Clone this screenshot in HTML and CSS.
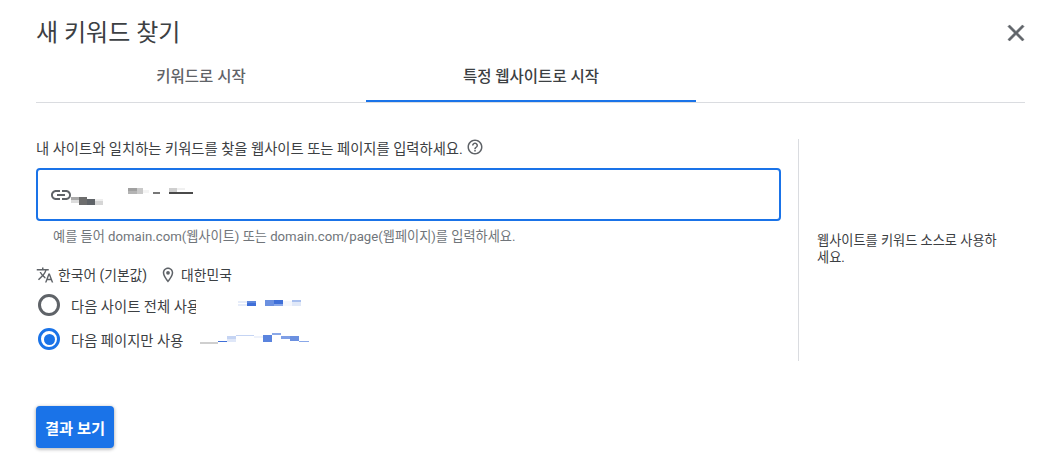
FILE: index.html
```html
<!DOCTYPE html>
<html lang="ko">
<head>
  <meta charset="UTF-8" />
  <title>새 키워드 찾기</title>
  <link rel="stylesheet" href="styles.css">
</head>
<body>
  <div class="dialog">
    <div class="header">
      <h1>새 키워드 찾기</h1>
      <svg class="close" viewBox="0 0 24 24"><path d="M19 6.41L17.59 5 12 10.59 6.41 5 5 6.41 10.59 12 5 17.59 6.41 19 12 13.41 17.59 19 19 17.59 13.41 12z"/></svg>
    </div>

    <div class="tabs">
      <div class="tab">키워드로 시작</div>
      <div class="tab active">특정 웹사이트로 시작</div>
    </div>

    <div class="content">
      <div class="main">
        <div class="prompt">
          <span>내 사이트와 일치하는 키워드를 찾을 웹사이트 또는 페이지를 입력하세요.</span>
          <svg class="help" viewBox="0 0 24 24"><path d="M11 18h2v-2h-2v2zm1-16C6.48 2 2 6.48 2 12s4.48 10 10 10 10-4.48 10-10S17.52 2 12 2zm0 18c-4.41 0-8-3.59-8-8s3.59-8 8-8 8 3.59 8 8-3.59 8-8 8zm0-14c-2.21 0-4 1.79-4 4h2c0-1.1.9-2 2-2s2 .9 2 2c0 2-3 1.75-3 5h2c0-2.25 3-2.5 3-5 0-2.21-1.79-4-4-4z"/></svg>
        </div>

        <div class="url-input">
          <svg class="link" viewBox="0 0 24 24"><path d="M3.9 12c0-1.71 1.39-3.1 3.1-3.1h4V7H7c-2.76 0-5 2.24-5 5s2.24 5 5 5h4v-1.9H7c-1.71 0-3.1-1.39-3.1-3.1zM8 13h8v-2H8v2zm9-6h-4v1.9h4c1.71 0 3.1 1.39 3.1 3.1s-1.39 3.1-3.1 3.1h-4V17h4c2.76 0 5-2.24 5-5s-2.24-5-5-5z"/></svg>
          <!-- 가려진 URL -->
          <svg class="smear smear-url" viewBox="0 0 124 24" shape-rendering="crispEdges">
            <rect x="0" y="15" width="8" height="3" fill="#a8a8a8"/>
            <rect x="0" y="18" width="8" height="3" fill="#dcdcdc"/>
            <rect x="8" y="15" width="8" height="8" fill="#6d6d6d"/>
            <rect x="16" y="17" width="8" height="6" fill="#5f6368"/>
            <rect x="24" y="17" width="8" height="2" fill="#eeeeee"/>
            <rect x="24" y="19" width="8" height="4" fill="#d6d6d6"/>
            <rect x="57" y="6" width="9" height="3" fill="#a0a0a0"/>
            <rect x="57" y="9" width="9" height="3" fill="#b4b4b4"/>
            <rect x="66" y="6" width="6" height="6" fill="#c9c9c9"/>
            <rect x="72" y="8" width="6" height="3" fill="#f4f4f4"/>
            <rect x="82" y="10" width="7" height="2" fill="#777777"/>
            <rect x="98" y="6" width="8" height="4" fill="#cfcfcf"/>
            <rect x="106" y="6" width="8" height="2" fill="#f0f0f0"/>
            <rect x="98" y="10" width="24" height="2" fill="#4a4a4a"/>
          </svg>
        </div>
        <div class="hint">예를 들어 domain.com(웹사이트) 또는 domain.com/page(웹페이지)를 입력하세요.</div>

        <div class="locale">
          <svg class="locale-icon" viewBox="0 0 24 24"><path d="M12.87 15.07l-2.54-2.51.03-.03c1.74-1.94 2.98-4.17 3.71-6.53H17V4h-7V2H8v2H1v1.99h11.17C11.5 7.92 10.44 9.75 9 11.35 8.07 10.32 7.3 9.19 6.69 8h-2c.73 1.63 1.73 3.17 2.98 4.56l-5.09 5.02L4 19l5-5 3.11 3.11.76-2.04zM18.5 10h-2L12 22h2l1.12-3h4.75L21 22h2l-4.5-12zm-2.62 7l1.62-4.33L19.12 17h-3.24z"/></svg>
          <span>한국어 (기본값)</span>
          <svg class="locale-icon pin" viewBox="0 0 24 24"><path d="M12 2C8.13 2 5 5.13 5 9c0 5.25 7 13 7 13s7-7.75 7-13c0-3.87-3.13-7-7-7zM7 9c0-2.76 2.24-5 5-5s5 2.24 5 5c0 2.88-2.88 7.19-5 9.88C9.92 16.21 7 11.85 7 9z"/><circle cx="12" cy="9" r="2.5"/></svg>
          <span>대한민국</span>
        </div>

        <div class="radio-row">
          <span class="radio"></span>
          <span class="radio-label clipped">다음 사이트 전체 사용</span>
          <svg class="smear smear-site" viewBox="0 0 66 8" shape-rendering="crispEdges">
            <rect x="0" y="1" width="9" height="2" fill="#e6ecf9"/>
            <rect x="0" y="4" width="9" height="2" fill="#e6ecf9"/>
            <rect x="9" y="1" width="9" height="2" fill="#5f87dc"/>
            <rect x="9" y="3" width="9" height="3" fill="#3f6fd8"/>
            <rect x="27" y="0" width="9" height="6" fill="#6b90e0"/>
            <rect x="36" y="0" width="9" height="4" fill="#3f6fd8"/>
            <rect x="36" y="4" width="9" height="2" fill="#8aa8e8"/>
            <rect x="45" y="1" width="9" height="5" fill="#f4f6fc"/>
            <rect x="54" y="0" width="9" height="2" fill="#a9c0ef"/>
            <rect x="54" y="2" width="9" height="4" fill="#e0e8f8"/>
          </svg>
        </div>
        <div class="radio-row">
          <span class="radio checked"></span>
          <span class="radio-label">다음 페이지만 사용</span>
          <svg class="smear smear-page" viewBox="0 0 112 12" shape-rendering="crispEdges">
            <rect x="0" y="9" width="18" height="2" fill="#cfcfcf"/>
            <rect x="18" y="8" width="9" height="1" fill="#3f6fd8"/>
            <rect x="27" y="3" width="9" height="3" fill="#c5d4f3"/>
            <rect x="27" y="6" width="9" height="3" fill="#dfe7f8"/>
            <rect x="36" y="2" width="18" height="1" fill="#c5d4f3"/>
            <rect x="54" y="3" width="9" height="2" fill="#eef2fb"/>
            <rect x="63" y="2" width="9" height="7" fill="#5a84de"/>
            <rect x="72" y="0" width="9" height="2" fill="#8aa8e8"/>
            <rect x="81" y="3" width="9" height="3" fill="#7f9fe6"/>
            <rect x="90" y="3" width="9" height="5" fill="#6b90e0"/>
            <rect x="99" y="8" width="10" height="1" fill="#8aa8e8"/>
          </svg>
        </div>
      </div>

      <div class="side">
        <p>웹사이트를 키워드 소스로 사용하세요.</p>
      </div>
    </div>

    <button class="submit" type="button">결과 보기</button>
  </div>
</body>
</html>
```

FILE: styles.css
```css
body {
  margin: 0;
  background: #fff;
  font-family: Roboto, "Noto Sans CJK KR", sans-serif;
  color: #3c4043;
}

.dialog {
  width: 1060px;
  height: 457px;
  box-sizing: border-box;
  padding: 17px 35px 0 36px;
  overflow: hidden;
}

.header {
  display: flex;
  justify-content: space-between;
  align-items: center;
  height: 32px;
}

h1 {
  margin: 0;
  font-size: 24px;
  line-height: 32px;
  font-weight: 400;
  color: #3c4043;
}

.close {
  width: 24px;
  height: 24px;
  margin: 0 -3px 0 0;
  fill: #5f6368;
  stroke: #5f6368;
  stroke-width: 0.5;
  transform: scale(1.15);
}

.tabs {
  display: flex;
  height: 52px;
  border-bottom: 1px solid #dadce0;
  box-sizing: border-box;
  margin-top: 2px;
}

.tab {
  width: 330px;
  height: 51px;
  box-sizing: border-box;
  text-align: center;
  font-size: 15.5px;
  line-height: 52px;
  font-weight: 500;
  color: #5f6368;
}

.tab.active {
  color: #3c4043;
  border-bottom: 2px solid #1a73e8;
}

.content {
  display: flex;
  height: 222px;
  margin-top: 36px;
}

.main {
  width: 745px;
  flex: none;
}

.prompt {
  display: flex;
  align-items: flex-start;
  box-sizing: border-box;
  height: 29px;
  font-size: 14.3px;
  line-height: 20px;
  color: #3c4043;
}

.help {
  width: 18px;
  height: 18px;
  margin: -1px 0 0 3px;
  fill: #5f6368;
}

.url-input {
  display: flex;
  align-items: center;
  box-sizing: border-box;
  height: 53px;
  border: 2px solid #1a73e8;
  border-radius: 4px;
}

.link {
  width: 24px;
  height: 24px;
  margin-left: 11px;
  fill: #5f6368;
  flex: none;
}

.smear {
  display: block;
  flex: none;
}

.smear-url {
  width: 124px;
  height: 24px;
  margin-left: -2px;
  margin-top: -1px;
}

.hint {
  margin: 7px 0 0 17px;
  font-size: 13.2px;
  line-height: 18px;
  color: #70757a;
}

.locale {
  display: flex;
  align-items: center;
  height: 20px;
  margin: 19px 0 3px;
  font-size: 13.8px;
  line-height: 20px;
}

.locale-icon {
  width: 18px;
  height: 18px;
  fill: #5f6368;
  margin-right: 4px;
}

.pin {
  margin-left: 12px;
}

.radio-row {
  display: flex;
  align-items: center;
  height: 34px;
  font-size: 14.3px;
  padding-left: 2px;
}

.radio {
  width: 22px;
  height: 22px;
  box-sizing: border-box;
  border: 3px solid #5f6368;
  border-radius: 50%;
  flex: none;
  position: relative;
}

.radio.checked {
  border-color: #1a73e8;
}

.radio.checked::after {
  content: "";
  position: absolute;
  left: 2.5px;
  top: 2.5px;
  width: 11px;
  height: 11px;
  border-radius: 50%;
  background: #1a73e8;
}

.radio-label {
  margin-left: 11px;
  white-space: nowrap;
  flex: none;
}

.clipped {
  width: 125px;
  overflow: hidden;
}

.smear-site {
  width: 66px;
  height: 8px;
  margin-left: 42px;
  margin-top: -2px;
}

.smear-page {
  width: 112px;
  height: 12px;
  margin-left: 17px;
}

.side {
  width: 227px;
  margin-left: 17px;
  flex: none;
  box-sizing: border-box;
  border-left: 1px solid #dadce0;
  padding: 93px 18px 0 18px;
}

.side p {
  margin: 0;
  font-size: 13.2px;
  line-height: 17px;
  color: #3c4043;
}

.submit {
  display: block;
  width: 78px;
  height: 42px;
  margin-top: 45px;
  padding: 0;
  border: none;
  border-radius: 4px;
  background: #1a73e8;
  color: #fff;
  font-family: inherit;
  font-size: 15.3px;
  font-weight: 700;
  box-shadow: 0 1px 3px 1px rgba(60, 64, 67, 0.3);
}
```
